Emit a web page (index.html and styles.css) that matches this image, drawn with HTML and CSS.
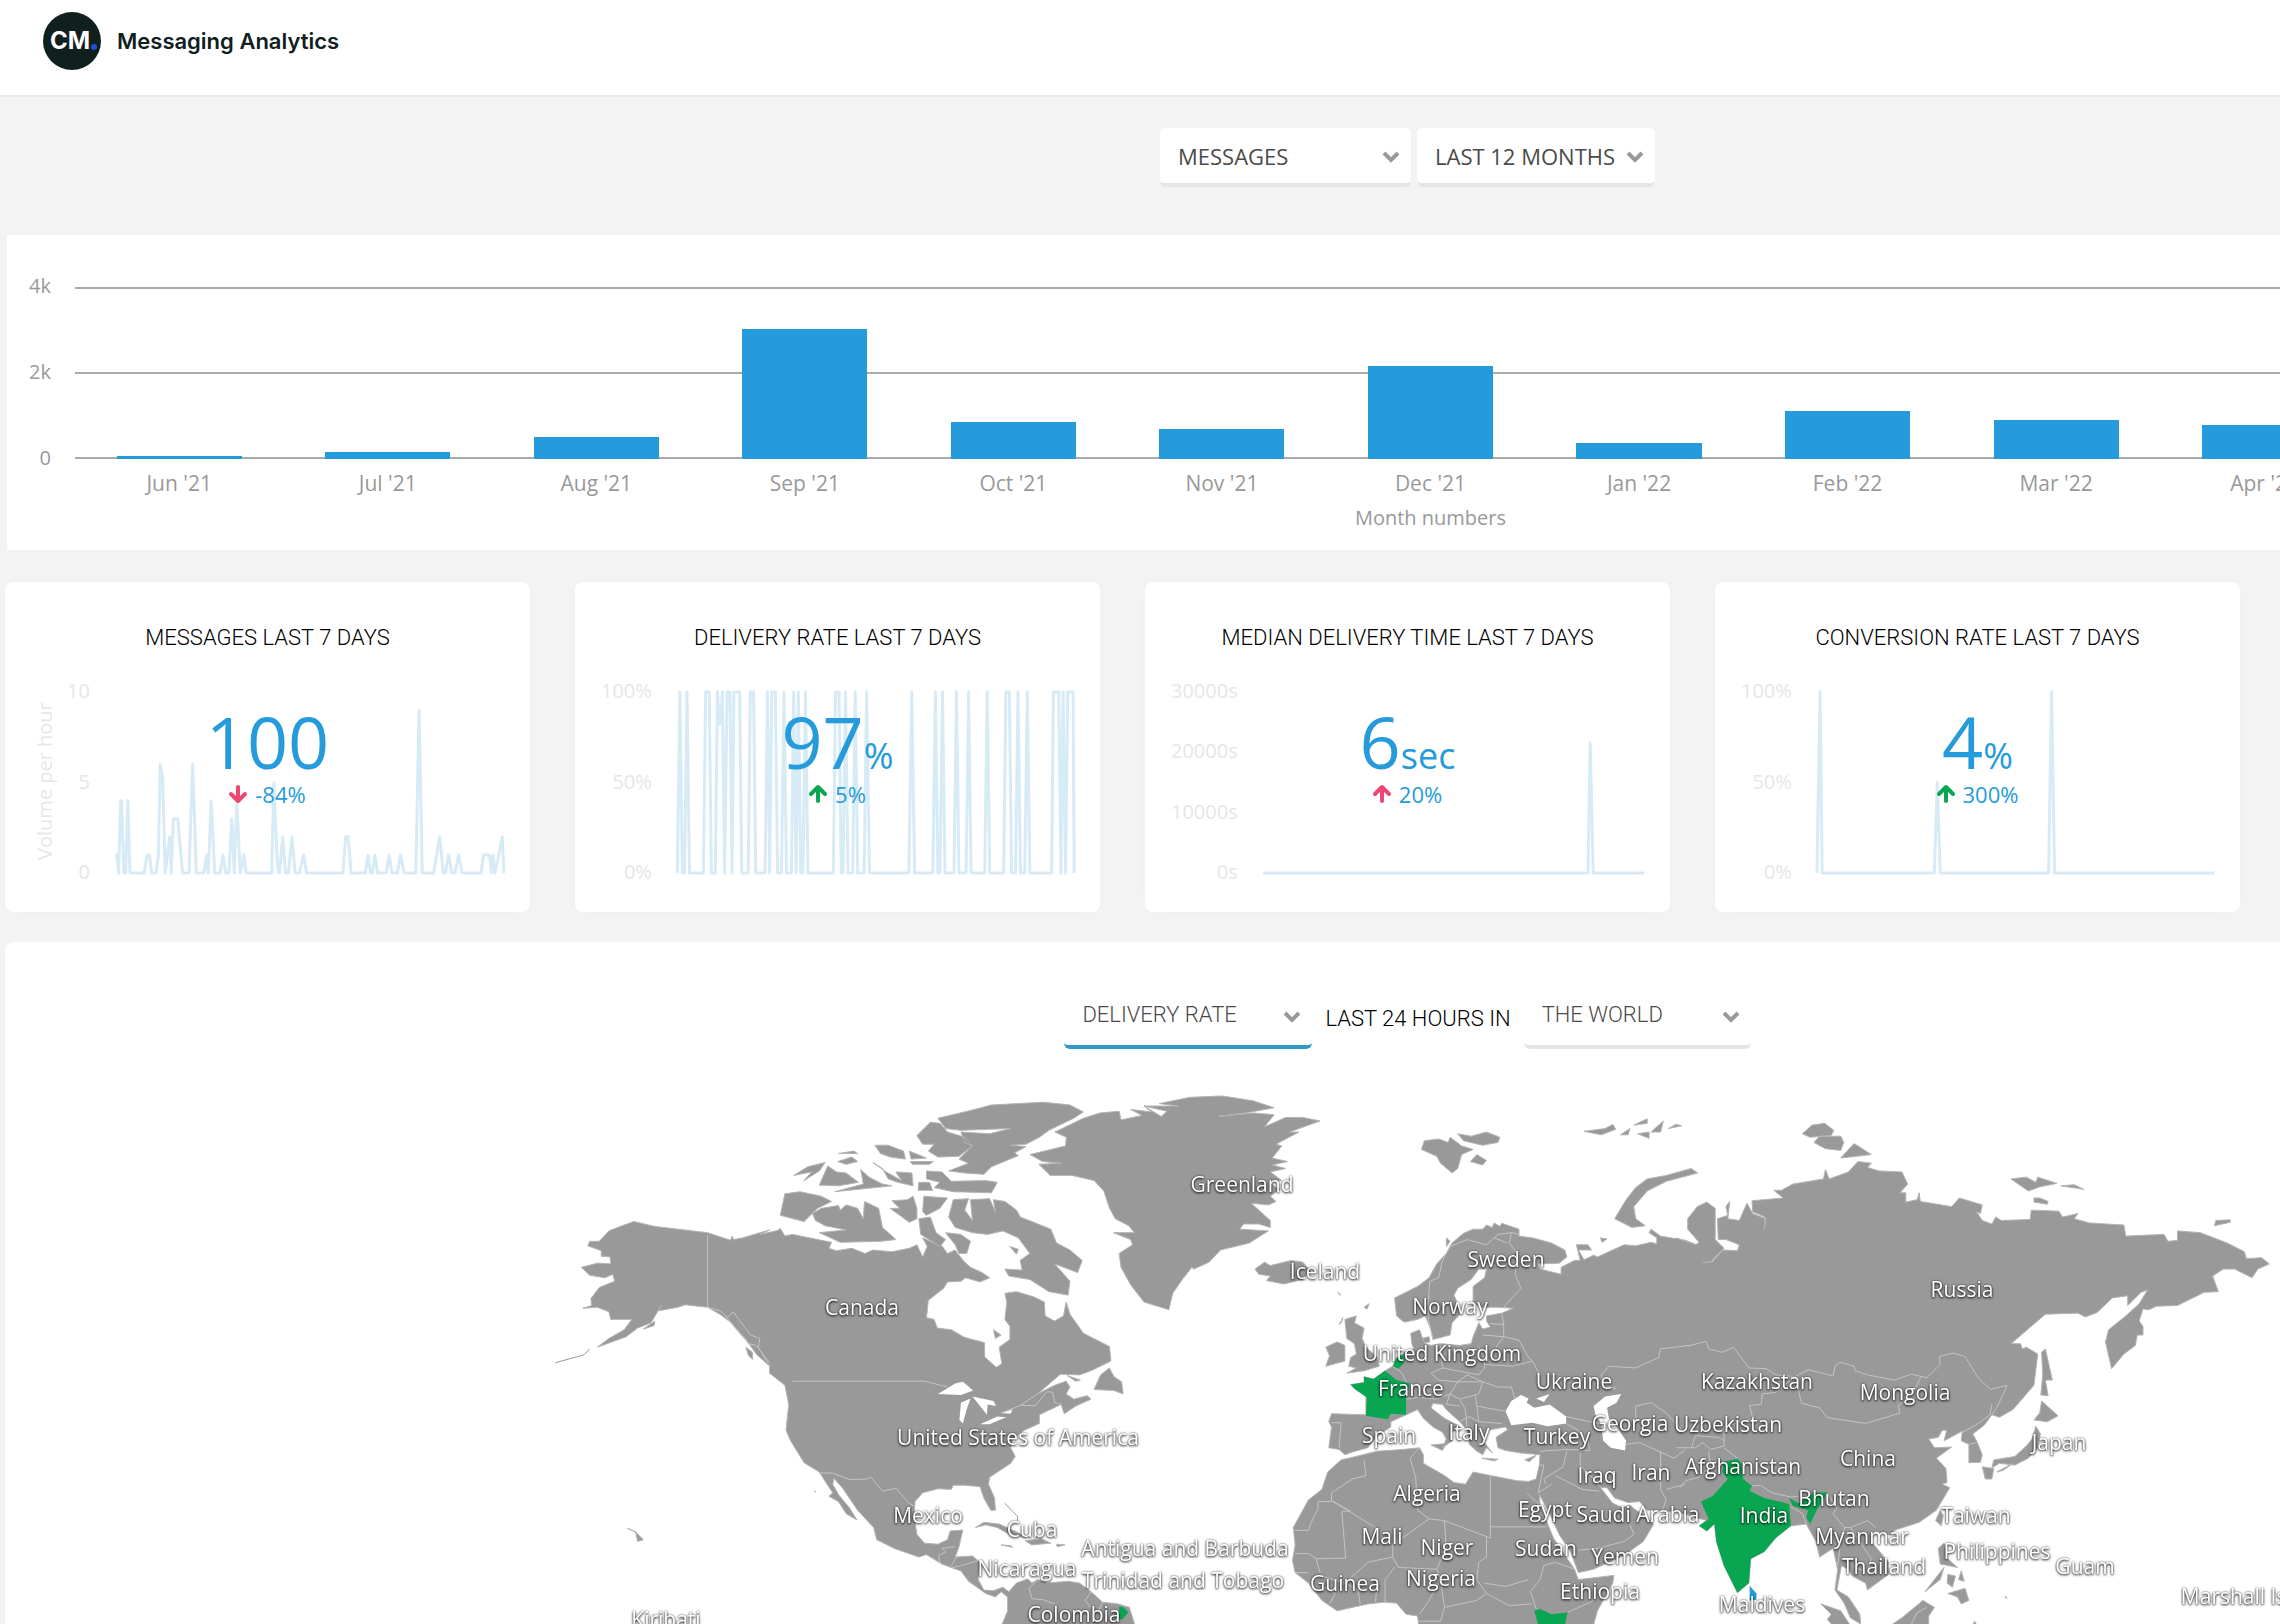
FILE: index.html
```html
<!DOCTYPE html>
<html lang="en">
  <head>
    <meta charset="utf-8">
    <title>Messaging Analytics</title>
    <link rel="stylesheet" href="styles.css">
  </head>
  <body>
    <div class="page">
      <header class="header">
        <svg class="logo" viewBox="0 0 58 58" aria-hidden="true">
          <circle cx="29" cy="29" r="29" fill="#10201f"/>
          <text x="27" y="37" class="logo-text">CM</text>
          <circle cx="51" cy="35" r="3" fill="#1d4fe0"/>
        </svg>
        <h1>Messaging Analytics</h1>
      </header>

      <main>
        <form class="filters">
          <label class="select select-metric">
            <select aria-label="Metric"><option>MESSAGES</option></select>
            <svg class="chevron" viewBox="0 0 16 10"><path d="M1 1l7 7 7-7"/></svg>
          </label>
          <label class="select select-period">
            <select aria-label="Period"><option>LAST 12 MONTHS</option></select>
            <svg class="chevron" viewBox="0 0 16 10"><path d="M1 1l7 7 7-7"/></svg>
          </label>
        </form>

        <section class="bar-card">
          <div class="y-axis"><span>4k</span><span>2k</span><span>0</span></div>
          <div class="plot">
            <div class="bars">
              <div class="bar" style="height: 3px"></div>
              <div class="bar" style="height: 7px"></div>
              <div class="bar" style="height: 22px"></div>
              <div class="bar" style="height: 130px"></div>
              <div class="bar" style="height: 37px"></div>
              <div class="bar" style="height: 30px"></div>
              <div class="bar" style="height: 93px"></div>
              <div class="bar" style="height: 16px"></div>
              <div class="bar" style="height: 48px"></div>
              <div class="bar" style="height: 39px"></div>
              <div class="bar" style="height: 34px"></div>
            </div>
            <div class="months">
              <span>Jun '21</span>
              <span>Jul '21</span>
              <span>Aug '21</span>
              <span>Sep '21</span>
              <span>Oct '21</span>
              <span>Nov '21</span>
              <span>Dec '21</span>
              <span>Jan '22</span>
              <span>Feb '22</span>
              <span>Mar '22</span>
              <span>Apr '22</span>
            </div>
            <div class="x-title">Month numbers</div>
          </div>
        </section>

        <section class="cards">
          <article class="card">
            <h2>MESSAGES LAST 7 DAYS</h2>
            <div class="spark">
              <div class="spark-title">Volume per hour</div>
              <div class="spark-axis"><span>10</span><span>5</span><span>0</span></div>
              <svg class="line" viewBox="0 0 1093 543" preserveAspectRatio="none">
                <path d="M0 489H5L10 543 16 326H18L25 543H30L36 326 42 543H82L90 489H97L103 543H115L122 490 127 217 134 260 141 543 154 434 158 543 164 380H176L190 543H208L214 340 218 217 224 400 228 543H250L257 489 262 543 270 326 280 543H295L303 489 311 543H320L328 380 335 543 342 326 352 543 362 489 368 543H440L446 272 455 500 460 543H462L471 434 479 543H487L497 434 506 543H518L530 489 538 543H640L648 434H655L663 543H703L711 489 718 543H723L730 489 738 543H762L770 489 778 543H793L802 489 812 543H845L854 54 863 543H895L912 434 922 543H928L937 489 946 543H955L965 489 975 543H1028L1035 489H1052L1058 543 1062 489 1067 543 1078 489 1088 434 1092 543"/>
              </svg>
            </div>
            <div class="kpi">
              <div class="value">100</div>
              <div class="trend">
                <svg class="arrow bad" viewBox="0 0 18 18"><path d="M9 2V15M2 9l7 7 7-7"/></svg>
                -84%
              </div>
            </div>
          </article>

          <article class="card">
            <h2>DELIVERY RATE LAST 7 DAYS</h2>
            <div class="spark">
              <div class="spark-axis"><span>100%</span><span>50%</span><span>0%</span></div>
              <svg class="line" viewBox="0 0 1110 543" preserveAspectRatio="none">
                <path d="M1 543L8 0 15 543H21L28 0 35 543H74L80 0H90L96 543H107L113 0 118 95H121L127 0 133 543 140 0H148L154 543 159 0H175L181 543H199L205 0H214L220 543H246L253 0 259 543 265 0H275L281 543H292L299 0 306 543H320L326 0 333 543 339 0 346 543H352L359 0 366 543H437L443 0H453L459 543H464L471 0 478 543H491L498 0 505 543H523L530 0 538 543H648L656 0 664 543H715L722 0 729 543H735L742 0 749 543H774L781 0 788 543H808L815 0 822 543H860L867 0 874 543H913L919 0H929L935 543H946L953 0 960 543H972L979 0 986 543H1047L1052 0H1067L1073 543 1079 0 1086 543 1092 0H1107L1110 543"/>
              </svg>
            </div>
            <div class="kpi">
              <div class="value">97<small>%</small></div>
              <div class="trend">
                <svg class="arrow good" viewBox="0 0 18 18"><path d="M9 16V3M2 9l7-7 7 7"/></svg>
                5%
              </div>
            </div>
          </article>

          <article class="card">
            <h2>MEDIAN DELIVERY TIME LAST 7 DAYS</h2>
            <div class="spark">
              <div class="spark-axis"><span>30000s</span><span>20000s</span><span>10000s</span><span>0s</span></div>
              <svg class="line" viewBox="0 0 515 543" preserveAspectRatio="none">
                <path d="M0 543H439L442 152 446 543H515"/>
              </svg>
            </div>
            <div class="kpi">
              <div class="value">6<small>sec</small></div>
              <div class="trend">
                <svg class="arrow bad" viewBox="0 0 18 18"><path d="M9 16V3M2 9l7-7 7 7"/></svg>
                20%
              </div>
            </div>
          </article>

          <article class="card">
            <h2>CONVERSION RATE LAST 7 DAYS</h2>
            <div class="spark">
              <div class="spark-axis"><span>100%</span><span>50%</span><span>0%</span></div>
              <svg class="line" viewBox="0 0 535 543" preserveAspectRatio="none">
                <path d="M0 543L4 0 7 543H158L162 271 166 543H312L316 0 320 543H535"/>
              </svg>
            </div>
            <div class="kpi">
              <div class="value">4<small>%</small></div>
              <div class="trend">
                <svg class="arrow good" viewBox="0 0 18 18"><path d="M9 16V3M2 9l7-7 7 7"/></svg>
                300%
              </div>
            </div>
          </article>
        </section>

        <section class="map-card">
          <form class="map-filters">
            <label class="select select-line select-rate">
              <select aria-label="Map metric"><option>DELIVERY RATE</option></select>
              <svg class="chevron" viewBox="0 0 16 10"><path d="M1 1l7 7 7-7"/></svg>
            </label>
            <span>LAST 24 HOURS IN</span>
            <label class="select select-line select-region">
              <select aria-label="Region"><option>THE WORLD</option></select>
              <svg class="chevron" viewBox="0 0 16 10"><path d="M1 1l7 7 7-7"/></svg>
            </label>
          </form>

          <svg class="map" viewBox="0 0 2805 620" preserveAspectRatio="xMinYMin slice">
            <!-- North and Central America -->
            <g transform="translate(535 20) scale(.38265 .34694)">
              <path class="land" d="M245 408L300 422 438 440 498 462 502 450 506 460 530 455 600 432 575 445 620 434 628 428 640 450 660 445 762 468 755 485 775 492 815 485 850 500 870 490 920 495 965 485 985 475 1000 510 1012 480 1000 455 1030 470 1050 478 1065 500 1085 490 1095 505 1110 525 1125 540 1155 555 1175 570 1150 582 1112 570 1100 580 1065 582 1055 600 1015 635 1010 685 1030 690 1038 715 1075 720 1110 742 1162 757V798L1192 828 1207 818 1200 770 1228 748V710L1215 690 1220 640 1215 615 1245 610 1290 625 1318 640 1320 680 1345 695 1368 680 1375 640 1385 675 1420 730 1488 768 1492 810 1440 838 1410 850 1360 848 1300 905 1345 880 1375 868 1385 885 1375 905 1395 920 1430 910 1440 920 1400 940 1370 962 1362 935 1305 965V990L1265 1010 1235 1035 1230 1060 1242 1085 1230 1105 1175 1145 1172 1165 1188 1205 1190 1240 1178 1240 1160 1205 1150 1172 1110 1168H1080L1075 1180 1040 1178 1000 1190 980 1215 978 1260 985 1310 1005 1335 1040 1338 1065 1325 1072 1300 1105 1297 1095 1345 1085 1375 1130 1372 1150 1390 1145 1440 1160 1470 1185 1472 1210 1462 1225 1475 1245 1450 1275 1438 1285 1450 1300 1440 1325 1450 1380 1445 1410 1450 1440 1475 1470 1505 1510 1510 1540 1520 1560 1590H1200L1222 1530V1490L1205 1475 1190 1490 1165 1480 1120 1445 1100 1415 1050 1395 1010 1368 990 1375 925 1350 880 1325 872 1290 830 1240 790 1175 768 1148 765 1165 780 1195 810 1235 828 1268 800 1250 780 1215 755 1200 765 1190 750 1165 730 1130 690 1103 655 1040 643 1010 650 935 640 880 600 845V825L565 790 540 750 500 700 470 675 438 655 380 648 360 655 310 665 318 648 290 700 255 715 225 740 150 770 180 745 220 720 240 690 215 690 185 690 180 668 150 655 112 658 135 650 133 630 155 598 195 580 190 560 170 570 130 563 108 540 150 528 185 530 183 510 160 508V492L125 478 130 465 155 465 180 435 210 422Z"/>
              <path class="land" d="M1040 110L1125 88 1180 72 1315 64 1385 72 1420 92 1395 110 1330 145 1305 165 1270 185 1230 188 1270 192 1240 210 1250 218 1180 250 1160 272 1110 268 1068 262 1120 240 1095 228 1130 190 1110 180 1100 150 1175 155 1230 140 1100 145 1060 140ZM1020 122L1045 125 1065 150 1110 165 1130 190 1095 220 1040 222 1015 205 1030 185 1000 185 985 160ZM1010 262L1050 265 1075 292 1165 290 1195 295 1180 325 1080 322 1030 310 1045 295 1010 285ZM663 275L700 250 745 238 730 262 690 290 710 265ZM730 303L752 248 775 265 800 268 832 295 780 305ZM780 212L820 205 830 212ZM778 235L815 222 830 235 800 243ZM838 258L860 280 895 300 920 305 770 322 845 300ZM875 188L910 188 950 205 955 228 915 222 890 212ZM965 205L1010 225 970 228ZM870 238L895 255 910 285 935 295 975 305 972 268 930 265 945 290 905 265ZM968 235H1028L1018 243H973ZM990 295H1018L1026 318H988ZM640 328L680 322 735 335 762 350 725 370 690 408 628 390ZM712 385L735 370 780 362 785 375 800 360 830 370 845 400 848 350 885 370 895 425 930 460 890 465 785 468 730 440 800 432 745 420 720 405ZM920 348L960 345 975 335 985 370V400L965 410 915 370 940 370ZM1003 335L1065 340 1045 370 1010 390 1000 380ZM990 400L1020 395 1035 440 1060 460 1045 480 995 445ZM1080 345L1120 342 1110 375 1130 405 1125 345 1175 342 1190 380 1185 345 1215 350 1245 375 1255 395 1290 410 1335 430 1350 470 1385 490 1417 520 1405 555 1345 530 1385 580 1380 620 1330 610 1280 575 1225 565 1215 545 1260 548 1255 520 1280 500 1250 455 1210 435 1170 445 1130 440 1085 425 1068 395ZM1060 440L1100 445 1125 465 1115 500 1095 500 1085 475ZM1228 480L1250 488 1245 502ZM1185 720L1205 735 1190 745ZM1488 830L1500 855 1520 870 1524 905 1500 895 1448 892 1465 850ZM1378 852L1412 865 1400 868ZM270 718L300 695 298 708ZM538 770L555 785 556 805 545 795ZM1138 1290L1160 1275 1200 1280 1250 1305 1270 1318 1235 1315 1195 1290 1165 1282ZM1268 1328L1310 1322 1335 1335 1285 1340ZM1205 1340L1230 1342 1235 1347ZM1350 1338L1372 1340 1352 1345ZM250 1303L270 1325 255 1330Z"/>
              <path class="coast" d="M40 815L115 792 130 775M228 1292L252 1304M1215 1220L1248 1258V1270M625 850L668 885 648 872M605 830L625 842M570 790L598 805M505 700L530 735M515 690L545 735 560 765M716 1184l5 4"/>
              <path class="water" d="M1040 905L1085 875 1105 870 1132 895 1100 908ZM1100 930L1125 918 1115 950 1105 990 1096 980ZM1130 912L1185 925 1192 940 1170 935 1168 965 1150 940ZM1150 992L1195 970 1218 972 1175 992ZM1205 960L1235 950 1230 962Z"/>
              <path class="border" d="M438 448V655L470 665 490 685 505 668 550 735 575 745 570 770 600 825M660 868H1005L1065 885M730 1133H765L810 1152 855 1150 865 1145 895 1185 930 1177 965 1220 978 1228M1205 960L1255 938H1295L1325 898 1340 900 1345 930 1362 935M1255 938L1300 905M1045 1393L1042 1370 1060 1360 1050 1350 1085 1345M1075 1400L1088 1375M1078 1405L1100 1400 1145 1385M1300 1440L1278 1465 1285 1495 1315 1498 1345 1510M1440 1475L1425 1500 1438 1520M1470 1505L1460 1530M485 680L510 715 545 760 565 765 600 815"/>
            </g>

            <!-- Greenland, Europe, Africa and the Middle East -->
            <g transform="translate(1095 20) scale(.38265 .34694)">
              <path class="land" d="M-43 110L-118 150-88 165-90 190-183 215-150 235-100 240-160 243-130 275-73 275-15 290 10 320 25 370 40 400 75 420 90 440 35 440 80 460 85 475 50 500 55 540 80 590 115 640 180 662 190 615 215 575 240 540 245 545 285 525 315 490 390 470 440 435 365 430 375 415 415 415 445 425V405L395 355 440 360 460 350 445 335 470 315 440 295 475 290 445 265 485 255 450 245 490 235 450 225 475 190 460 185 520 150 495 150 575 118 530 108H485L430 135 455 100 400 95 310 105 380 95 455 80 400 60 320 46 235 50 155 68 205 75H115L175 90 160 105 115 75 135 92 80 85 110 102 55 115 50 90 0 95Z"/>
              <path class="land" d="M405 545L430 525 445 535 470 528 500 520 530 525 550 550 530 575 480 588 435 578 445 565 415 560ZM848 175L885 170 910 180 915 165 945 190 975 200 945 215 935 255 920 268 890 240 880 220 840 200ZM935 155L970 162 1010 150 1045 165 1040 180 1000 188 950 175ZM968 235L985 215 1010 232 1000 245ZM1265 148L1320 140 1340 128 1348 142 1310 158ZM1360 158L1385 140 1380 158ZM1395 130L1430 112V125ZM1405 155L1435 150V168ZM1440 150L1472 118 1465 150ZM1485 140L1505 128 1520 132ZM1345 400L1375 345 1400 310 1430 285 1480 275 1545 255 1562 268 1480 292 1430 320 1395 365 1400 400 1425 420 1390 425ZM1308 455L1325 458 1312 468ZM905 455L915 465 905 480ZM640 690L670 680 665 700 690 715 685 745 695 770 725 800 730 825 690 838 645 845 670 830 650 825 655 800 670 790 665 760 645 745ZM590 770L620 755 640 765V810L590 825 600 795ZM865 1052L905 1048 895 1068ZM998 1090L1040 1093 1030 1098ZM1110 1095L1140 1082 1122 1100ZM840 745L860 740 862 755 848 758ZM625 705L635 685 630 700ZM690 655L703 645 698 660ZM622 612L630 620 626 618Z"/>
              <path class="land" d="M1560 475L1530 462 1465 450 1440 430 1435 440 1455 455V472L1440 468 1400 478 1370 475 1300 510 1290 505 1265 518 1250 490 1285 490 1275 475 1245 475 1255 520 1240 520 1205 540V560L1150 545 1145 530 1200 528 1220 510 1215 490 1180 470 1130 455 1095 450V430L1050 413 1045 422 1030 412 1025 425 1010 418 1000 430 975 430 950 442 920 470 905 500 880 530 860 570 830 595 770 628 775 680 795 698 830 690 850 680 865 720 870 748 915 735 920 700 945 670 925 620 935 600 970 575 990 545H1010L1005 570 975 595V640L995 655H1040L1080 658 1050 672 1010 680V695L1020 712 1000 718 990 700 975 740 970 760 940 765 890 760 865 765 850 760 845 750 835 720 812 730 815 760 820 775 795 785 780 800 765 825 745 838 715 862 690 855V872L655 878 665 890 695 910V965L605 962 598 985 605 1000 598 1060 625 1065 640 1080 660 1072 700 1060 720 1030 760 1000V985L800 965 830 950 845 975 870 1000 895 1015 905 1035 895 1060 920 1040 915 1015 945 1005 935 995 900 975 865 945 870 932 895 935 905 950 940 985 960 1010 965 1050 985 1070 1000 1080 1010 1060 1025 1075 1005 1045 1010 1010 1060 1000 1065 1008 1035 1030 1040 1060 1060 1068 1100 1075 1150 1080 1148 1110 1140 1150 1120 1157 1090 1155 1020 1140 975 1130 955 1165 925 1160 900 1140 845 1105V1080L835 1060 790 1065 725 1070 650 1090 630 1095 595 1130 580 1180 545 1210 525 1250 505 1290 510 1340 503 1385 510 1420 545 1450 580 1500 620 1530 700 1510 745 1505 775 1508 800 1540 830 1545 835 1590H1285L1300 1530 1340 1450 1343 1428 1250 1440 1240 1410 1215 1370 1185 1320 1170 1280 1150 1225 1115 1190 1150 1225 1148 1195 1175 1250 1200 1310 1230 1360 1250 1420 1290 1410 1370 1370 1420 1330 1447 1280 1415 1250 1395 1235 1385 1225 1365 1232 1340 1220 1308 1175H1325L1345 1205 1380 1218 1410 1215 1430 1240 1510 1245 1560 1262"/>
            </g>

            <!-- Asia -->
            <g transform="translate(1675 20) scale(.38265 .34694)">
              <path class="land" d="M-10 455L40 475 50 468 20 430V400L45 365 70 352 92 370V460L115 485 80 525 60 526 85 524 112 490 150 492 155 475 120 460 100 460 98 400 125 390 120 365 130 350 125 400 155 405 175 355 190 385 225 400 220 430 222 395 190 380 188 348 270 340 245 318 265 318 295 300 375 285 380 258 390 285 440 265 465 235 500 240 490 252 520 262 580 265 595 300 575 325 590 325V352L620 345 625 325 628 350 710 365 730 340 790 360 785 385 775 380 790 405 815 415 825 395 840 405 915 402 918 375 990 378 1000 395 1040 385 1030 400 1070 412 1160 418 1165 450 1265 445 1275 465 1300 462V435L1360 440 1430 470 1475 495 1480 515 1520 512 1540 530 1510 545 1495 570 1450 545H1420L1392 565 1407 610 1370 612 1300 650 1245 652 1225 662 1210 660 1200 695 1210 710V735H1195L1190 765 1160 790 1128 832 1112 755 1120 720 1165 680 1200 645 1222 605 1205 612 1170 650V622L1130 628 1090 670 1060 683 1040 672 955 675 865 760 890 760 895 775 905 770 935 790 925 880 870 950 835 972 815 965 795 995 765 1020 775 1040 790 1080 785 1102 755 1103V1050L735 1040 738 1012 690 1040 697 1010 685 1010 675 1030 650 1035 665 1060 710 1058 670 1090 695 1120 698 1160 685 1165 705 1175 670 1240 625 1275 560 1298 550 1312 510 1300 500 1330 545 1390V1425L490 1470 485 1450 450 1430 440 1410 422 1400 410 1470 440 1490 470 1540 472 1568 445 1550 430 1510 405 1470 412 1410 400 1350 365 1375 355 1330 330 1280 290 1285 250 1320 220 1360 185 1380 180 1450 150 1478 115 1400 95 1330 90 1280 70 1300 50 1285 70 1270 44 1262"/>
              <path class="land" d="M320 155L345 130 378 125 402 145 395 160 340 165ZM350 180L365 162 420 162 428 180 420 203 380 198ZM420 225L455 183 500 215ZM865 285L905 280 930 295 935 280 985 298 940 308 910 320ZM995 305L1030 302 1055 315ZM925 340L940 340 962 350 960 358 925 352ZM1397 420L1400 405 1438 403 1438 410ZM945 785L955 775 973 865 955 865 962 910 943 908 948 850ZM925 980L940 960 945 925 988 968 960 985ZM930 998L942 1020 935 1060 910 1090 875 1110 835 1105 815 1118 820 1095 875 1085 905 1055 920 1035ZM790 1115L820 1120 815 1150 798 1150ZM828 1130L870 1105 845 1125ZM680 1240L688 1255 683 1285 668 1270ZM690 1335L700 1380 725 1405 680 1395 675 1350ZM640 1475L690 1405 680 1440ZM700 1425L720 1430 712 1462 698 1450ZM735 1415L743 1445 728 1440ZM700 1480L745 1465 755 1500 735 1510 725 1490ZM540 1580L580 1550 635 1500 665 1520 650 1545V1580ZM368 1510L420 1530 450 1580H405L385 1555 395 1540ZM770 1560L780 1580H760ZM850 1488l5 5-4 0z"/>
              <path class="border" d="M20 767L68 753 75 775 110 785 140 770 180 830 225 832 250 850 300 855 335 835 400 853 405 825 418 813 455 825 458 838 490 850 560 865 605 848 645 858 680 820 678 797 712 787 745 797 780 860 812 892 855 880 830 940 815 965M300 855L318 932 365 945 385 973 485 990 575 960 570 940 610 900 630 855M300 855L250 900 215 905 212 935 182 938 190 975 115 1000V1055L80 1065 60 1045 40 1060H-10M40 1025L30 1060M40 1025L100 1030 118 1040M115 1060L150 1090M0 1175L15 1155 50 1145 80 1110 75 1070M188 1170L210 1168 240 1190 290 1202 310 1200M385 1190L410 1235 400 1250 430 1290 445 1290 490 1270 512 1290M430 1290L420 1330 412 1400M445 1290L500 1380 490 1420 450 1400M290 1230L320 1250 330 1280M735 1018L780 990 810 965 815 935M755 1050L775 1045M605 1568L620 1535 645 1520"/>
              <path class="good" d="M150 1092L160 1105 165 1150 188 1170 182 1185 220 1205 285 1222 290 1285 250 1320 220 1360 185 1380 180 1450 150 1478 115 1400 95 1330 90 1280 70 1300 50 1285 75 1265 55 1215 85 1200 125 1150 110 1130 115 1100ZM285 1205L310 1220 350 1190 385 1188 355 1245 340 1280 330 1260 335 1240 295 1228Z"/>
              <path class="neutral" d="M182 1458L200 1480V1498L182 1500Z"/>
            </g>

            <!-- inland seas and borders west of the Urals -->
            <g transform="translate(1095 20) scale(.38265 .34694)">
              <path class="water" d="M1060 955L1075 925 1100 908 1120 918 1115 930 1135 945 1175 935 1218 970V990L1170 998 1130 988 1075 995ZM1140 918L1175 905 1160 928ZM1290 940L1320 912 1362 905 1350 930 1325 945 1330 975 1350 1000 1375 1040 1372 1068 1335 1060 1315 1040 1310 990 1295 965Z"/>
              <path class="border" d="M870 748L858 690 858 640 862 580 885 570 895 520 915 480 960 460 1010 475 1040 445 1075 440 1095 445M1030 455L1065 470M1075 440L1070 470 1090 500 1085 560 1100 600 1055 655M1050 672L1055 705 1020 702M1055 705V740L1000 735M1055 740L1095 750 1120 800 1130 810M1035 770L1055 740M890 765L895 830 990 850 1005 830V800L990 770M1005 820L1080 825 1130 810 1150 850M765 825L790 845 800 870M820 775L810 785M895 830L865 845 885 865 935 870 960 850M1000 870L935 870 915 905 880 920 830 915 800 920M1000 870L990 905 940 920 915 905M960 850L1000 870 1040 885 1075 885 1085 920M980 905L985 940 1060 955M915 905L905 935 940 940M940 920L955 950 960 1010M985 940L990 985 1050 990M940 985L965 970 990 985M605 988H630L625 1060M1150 1070L1220 1065 1280 1068M1218 970L1280 985 1310 990M1218 990L1250 1010 1275 1040 1280 1068M1255 1075V1110L1290 1150 1310 1175M1220 1070L1210 1115 1160 1150 1165 1165M1190 1140L1260 1180 1305 1185M1148 1110L1160 1110 1145 1190 1180 1165M1310 850L1330 825 1400 830 1440 810 1460 800 1465 775 1540 765M1310 850L1320 880 1350 890M1400 980V940L1440 930 1480 960 1530 1020M1375 1050L1410 1045 1460 1070 1500 1090 1530 1065M1465 1070V1180L1480 1210 1470 1240M1480 1180L1530 1165M1370 1330L1395 1310 1385 1280M1250 1355L1300 1350 1370 1330M1020 1140V1320L900 1270 860 1265 830 1240 825 1145 810 1090 835 1060M1020 1288H1168M690 1095L695 1140 660 1150 605 1190V1212L720 1290M605 1215H570V1235L550 1280 545 1298H505M632 1243L642 1378 565 1380 545 1365H510M605 1212L655 1243H632M860 1265L765 1340V1375L700 1390 670 1420 640 1450M765 1375L780 1405 880 1410 905 1350 900 1270M1010 1315V1375L990 1390 985 1440 1010 1480M880 1410L890 1440 860 1500 835 1540M890 1440L900 1520 985 1500 1010 1480 1070 1515 1130 1510M1005 1450L1060 1460 1120 1440M1190 1390L1160 1400 1150 1440 1125 1475 1140 1525M1190 1390L1240 1410M1222 1535L1290 1500M745 1505V1440L770 1405M680 1510L675 1470M720 1505L725 1440M545 1450L580 1430 640 1450 675 1470M600 1510L615 1480 575 1455M565 1380L575 1420M510 1420H545M835 1560H890L900 1520"/>
              <path class="good" d="M745 838L775 865 810 875 800 910V965L760 962 752 978 695 968 697 915 665 890 655 878 690 872V855L715 862ZM765 825L775 800 797 790 795 815 780 832ZM1135 1530L1150 1525 1180 1540 1222 1535 1215 1568 1220 1590H1150ZM50 1518L60 1518 74 1535 58 1555 50 1552Z"/>
            </g>

            <g class="map-labels">
              <text x="1237" y="132">Greenland</text>
              <text x="1320" y="219">Iceland</text>
              <text x="857" y="255">Canada</text>
              <text x="1957" y="237">Russia</text>
              <text x="1501" y="207">Sweden</text>
              <text x="1445" y="254">Norway</text>
              <text x="1437" y="301">United Kingdom</text>
              <text x="1569" y="329">Ukraine</text>
              <text x="1752" y="329">Kazakhstan</text>
              <text x="1900" y="340">Mongolia</text>
              <text x="1406" y="336">France</text>
              <text x="1384" y="383">Spain</text>
              <text x="1464" y="380">Italy</text>
              <text x="1552" y="384">Turkey</text>
              <text x="1625" y="371">Georgia</text>
              <text x="1723" y="372">Uzbekistan</text>
              <text x="2054" y="390">Japan</text>
              <text x="1013" y="385">United States of America</text>
              <text x="1863" y="406">China</text>
              <text x="1738" y="414">Afghanistan</text>
              <text x="1592" y="423">Iraq</text>
              <text x="1646" y="420">Iran</text>
              <text x="1422" y="441">Algeria</text>
              <text x="1829" y="446">Bhutan</text>
              <text x="923" y="463">Mexico</text>
              <text x="1540" y="457">Egypt</text>
              <text x="1633" y="462">Saudi Arabia</text>
              <text x="1759" y="463">India</text>
              <text x="1971" y="463">Taiwan</text>
              <text x="1027" y="477">Cuba</text>
              <text x="1377" y="484">Mali</text>
              <text x="1857" y="484">Myanmar</text>
              <text x="1442" y="495">Niger</text>
              <text x="1541" y="496">Sudan</text>
              <text x="1180" y="496">Antigua and Barbuda</text>
              <text x="1620" y="504">Yemen</text>
              <text x="1992" y="499">Philippines</text>
              <text x="1022" y="516">Nicaragua</text>
              <text x="1879" y="514">Thailand</text>
              <text x="2080" y="514">Guam</text>
              <text x="1178" y="528">Trinidad and Tobago</text>
              <text x="1340" y="531">Guinea</text>
              <text x="1436" y="526">Nigeria</text>
              <text x="1595" y="539">Ethiopia</text>
              <text x="1757" y="552">Maldives</text>
              <text x="2255" y="544">Marshall Islands</text>
              <text x="1069" y="562">Colombia</text>
              <text x="661" y="567">Kiribati</text>
            </g>
          </svg>
        </section>
      </main>
    </div>
  </body>
</html>
```

FILE: styles.css
```css
* {
  box-sizing: border-box;
}

body {
  margin: 0;
  background: #f3f3f3;
  font-family: "Open Sans", "Noto Sans", sans-serif;
  font-size: 20px;
  line-height: 28px;
}

.page {
  height: 100vh;
  overflow: hidden;
}

.header {
  display: flex;
  align-items: center;
  gap: 16px;
  height: 97px;
  padding: 0 43px 14px;
  background: #fff;
  border-bottom: 2px solid #e9e9e9;
}

.header h1 {
  margin: 0;
  font-family: Inter, sans-serif;
  font-size: 22px;
  font-weight: 600;
  color: #10201f;
}

.logo {
  width: 58px;
  height: 58px;
}

.logo-text {
  fill: #fff;
  font-family: Inter, sans-serif;
  font-size: 24px;
  font-weight: 700;
  text-anchor: middle;
}

/* the dashboard is wider than most windows and is cut off at the right */
main {
  min-width: 2815px;
  padding: 0 5px;
}

/* drop-downs */
.filters {
  display: flex;
  justify-content: center;
  gap: 6px;
  padding: 31px 0 48px;
}

.select {
  position: relative;
  display: block;
}

.select select {
  appearance: none;
  width: 100%;
  height: 59px;
  padding: 0 18px;
  border: 0;
  border-bottom: 4px solid #e5e5e5;
  border-radius: 6px;
  background: #fff;
  color: #4a4a4a;
  font-family: inherit;
  font-size: 22px;
}

.select-metric {
  width: 251px;
}

.select-period {
  width: 238px;
}

.chevron {
  position: absolute;
  top: 24px;
  right: 12px;
  width: 16px;
  height: 10px;
  fill: none;
  stroke: #999;
  stroke-width: 4;
  pointer-events: none;
  overflow: visible;
}

/* bar chart */
.bar-card {
  display: flex;
  gap: 24px;
  margin: 0 2px;
  padding: 52px 22px 18px;
  background: #fff;
  color: #999;
}

.y-axis {
  display: flex;
  flex-direction: column;
  justify-content: space-between;
  height: 200px;
  margin-top: -15px;
  text-align: right;
}

.plot {
  flex: 1;
}

.bars,
.months {
  display: grid;
  grid-template-columns: repeat(13, 1fr);
}

.bars {
  align-items: end;
  justify-items: center;
  height: 172px;
  background:
    linear-gradient(#aaa, #aaa) 0 0 / 100% 2px no-repeat,
    linear-gradient(#aaa, #aaa) 0 50% / 100% 2px no-repeat,
    linear-gradient(#aaa, #aaa) 0 100% / 100% 2px no-repeat;
}

.bar {
  width: 60%;
  background: #269bdb;
}

.months {
  margin-top: 10px;
  font-size: 21px;
  text-align: center;
}

.x-title {
  margin-top: 7px;
  text-align: center;
}

/* small cards */
.cards {
  display: grid;
  grid-template-columns: repeat(5, 1fr);
  gap: 45px;
  margin: 32px 0 30px;
}

.card {
  position: relative;
  height: 330px;
  padding: 42px 26px 24px;
  border-radius: 8px;
  background: #fff;
  box-shadow: 0 0 12px rgba(0, 0, 0, 0.02);
}

.card h2 {
  margin: 0 0 25px;
  font-family: Roboto, sans-serif;
  font-size: 22px;
  font-weight: 300;
  text-align: center;
  color: #000;
}

.spark {
  display: flex;
  height: 209px;
  color: #e6e6e6;
}

.spark-title {
  margin-right: 8px;
  writing-mode: vertical-rl;
  transform: rotate(180deg);
  text-align: center;
}

.spark-axis {
  display: flex;
  flex-direction: column;
  justify-content: space-between;
  margin-right: 25px;
  text-align: right;
}

.line {
  flex: 1;
  min-width: 0;
  height: 181px;
  margin: 15px 0 13px;
  overflow: visible;
}

.line path {
  fill: none;
  stroke: #d7ebf7;
  stroke-width: 3px;
  stroke-linejoin: round;
  vector-effect: non-scaling-stroke;
}

.kpi {
  position: absolute;
  top: 119px;
  left: 0;
  right: 0;
  text-align: center;
  color: #269bdb;
}

.value {
  height: 79px;
  font-size: 72px;
  line-height: 80px;
}

.value small {
  font-size: 36px;
  line-height: 40px;
}

.trend {
  display: flex;
  align-items: center;
  justify-content: center;
  gap: 8px;
  font-size: 22px;
}

.arrow {
  width: 18px;
  height: 18px;
  fill: none;
  stroke-width: 4;
  stroke-linecap: round;
  stroke-linejoin: round;
  overflow: visible;
}

.arrow.good {
  stroke: #08a651;
}

.arrow.bad {
  stroke: #ee4672;
}

/* map */
.map-card {
  padding-top: 46px;
  border-radius: 8px;
  background: #fff;
}

.map-filters {
  display: flex;
  align-items: center;
  justify-content: center;
  gap: 13px;
  margin-bottom: 11px;
  font-family: Roboto, sans-serif;
  font-size: 22px;
  font-weight: 300;
}

.select-line select {
  height: 61px;
  padding-bottom: 5px;
  color: #4a4a4a;
  font-weight: 300;
}

.select-rate {
  width: 248px;
}

.select-rate select {
  border-bottom-color: #3298cc;
}

.select-region {
  width: 227px;
}

.map {
  display: block;
  width: 100%;
}

.land {
  fill: #999;
  stroke: #b4b4b4;
  stroke-width: 1px;
  vector-effect: non-scaling-stroke;
}

.coast,
.border {
  fill: none;
  stroke: #c4c4c4;
  stroke-width: 1px;
  vector-effect: non-scaling-stroke;
}

.coast {
  stroke: #999;
}

.water {
  fill: #fff;
}

.map .good {
  fill: #08a651;
}

.map .neutral {
  fill: #269bdb;
}

.map-labels {
  fill: #fff;
  font-size: 21px;
  text-anchor: middle;
  filter: drop-shadow(0 0 1px rgba(0, 0, 0, 0.5)) drop-shadow(0 1px 1px rgba(0, 0, 0, 0.7));
}
```
